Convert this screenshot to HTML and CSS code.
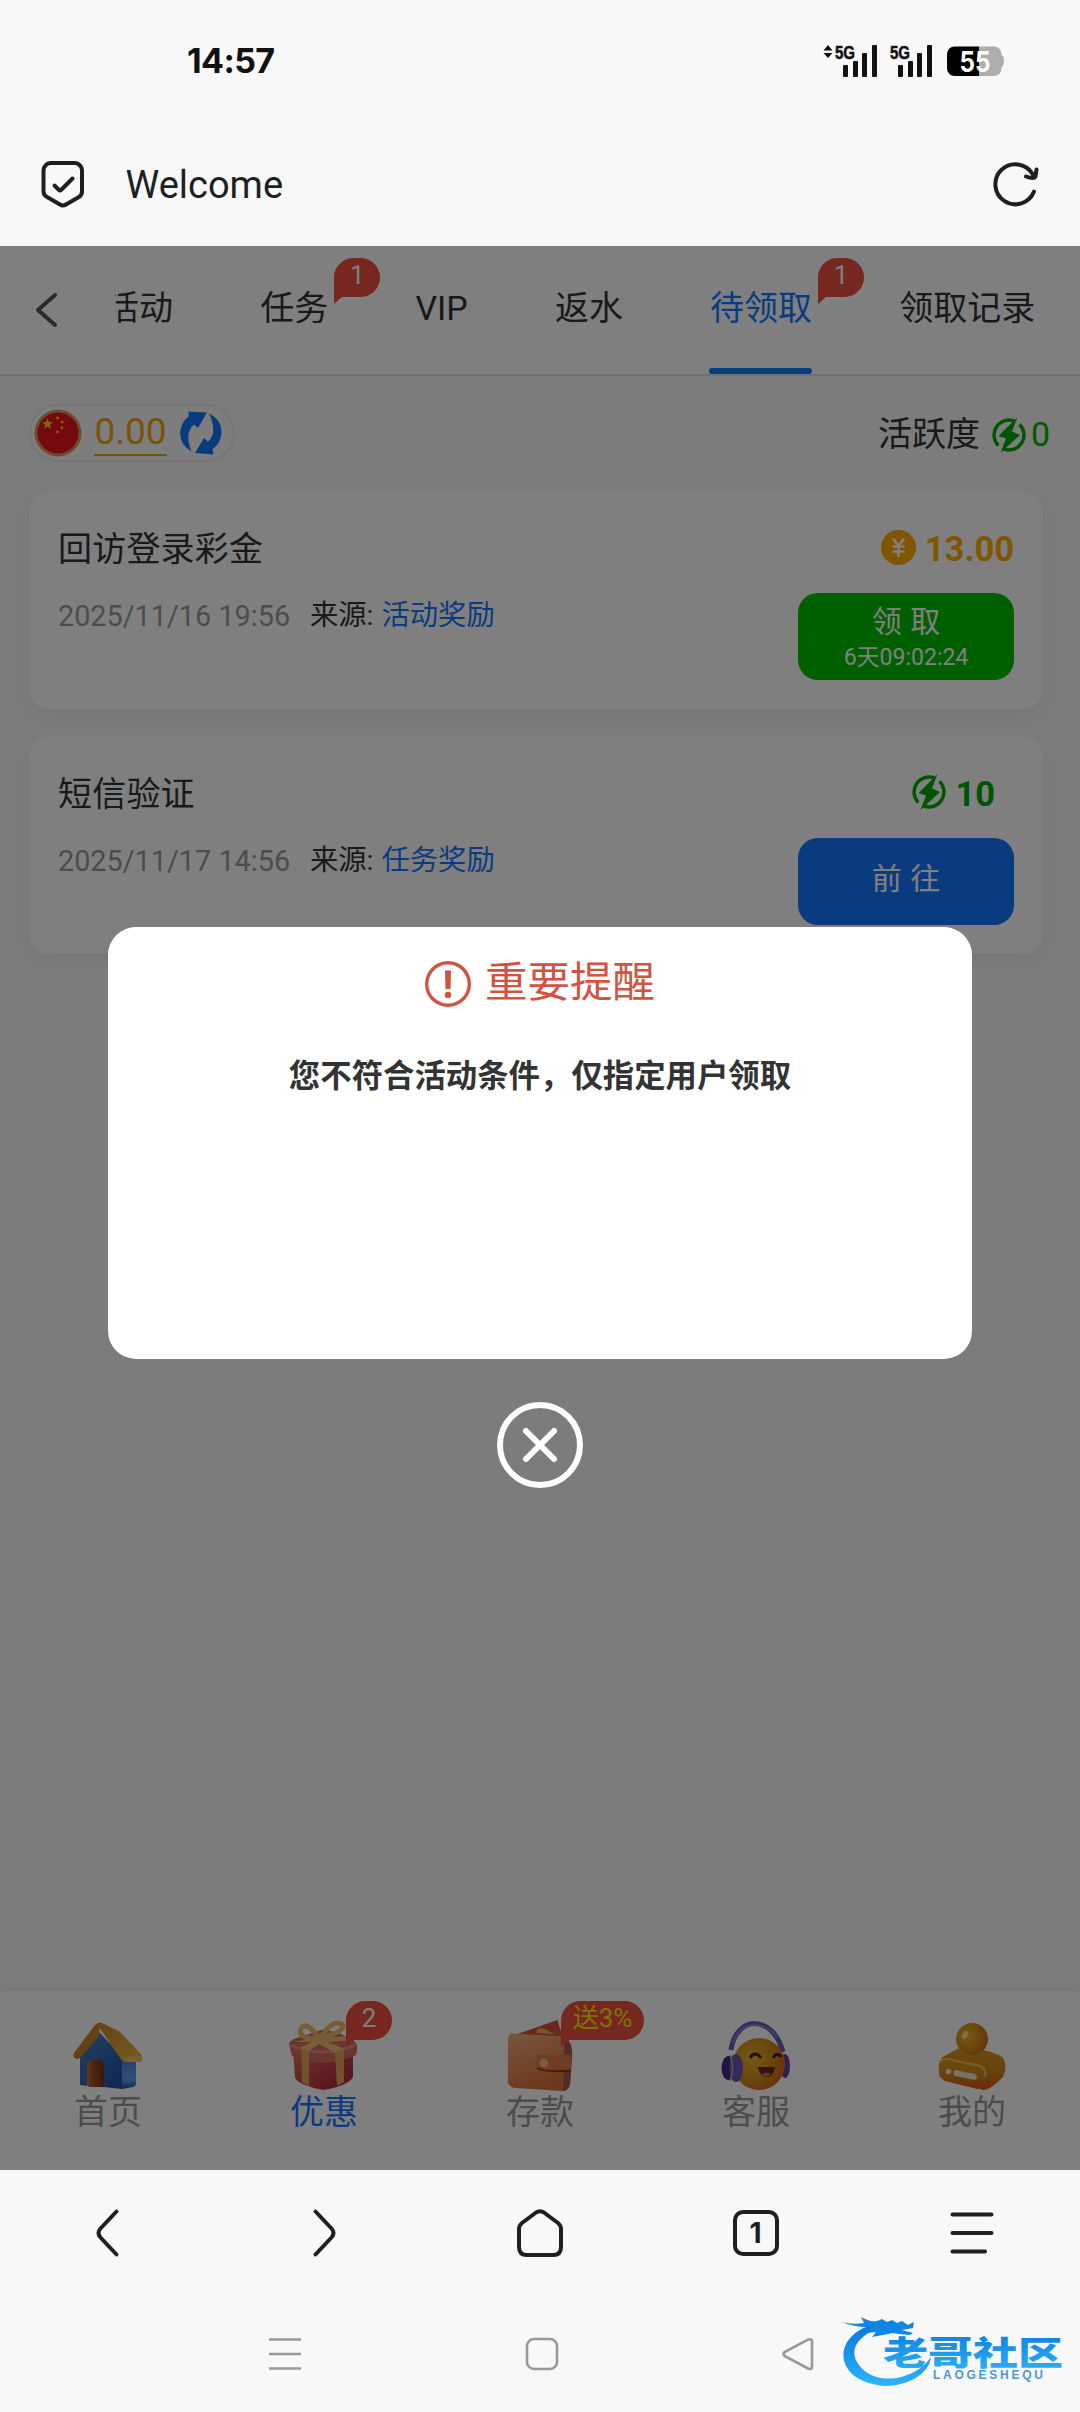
FILE: index.html
```html
<!DOCTYPE html>
<html lang="zh-CN">
<head>
<meta charset="utf-8">
<title>Welcome</title>
<link rel="stylesheet" href="styles.css">
</head>
<body>
<svg class="defs" width="0" height="0" aria-hidden="true">
  <defs>
    <symbol id="bolt" viewBox="0 0 34 36">
      <path d="M22.100 3.900A15 15 0 0 0 6.400 28.600M11.900 32.100A15 15 0 0 0 27.600 7.400" fill="none" stroke="currentColor" stroke-width="3.400"/>
      <path d="M25.500 0 L6.500 19 L14 21.500 L8.500 36 L28 18 L20 14.500 Z" fill="currentColor"/>
    </symbol>
    <linearGradient id="roof" x1="0" y1="0" x2="1" y2="1"><stop offset="0" stop-color="#c98a28"/><stop offset="1" stop-color="#efb445"/></linearGradient>
    <linearGradient id="wall" x1="0" y1="0" x2="1" y2="1"><stop offset="0" stop-color="#4c7cc4"/><stop offset="1" stop-color="#1c50a8"/></linearGradient>
    <linearGradient id="wall2" x1="0" y1="0" x2="0" y2="1"><stop offset="0" stop-color="#3f7fd6"/><stop offset=".7" stop-color="#62a2e8"/><stop offset="1" stop-color="#1e4f9c"/></linearGradient>
    <linearGradient id="door" x1="0" y1="0" x2="1" y2="0"><stop offset="0" stop-color="#d07830"/><stop offset=".3" stop-color="#a2521c"/><stop offset="1" stop-color="#6e3214"/></linearGradient>
    <linearGradient id="box" x1="0" y1="0" x2="1" y2="1"><stop offset="0" stop-color="#dc6a58"/><stop offset="1" stop-color="#a81f38"/></linearGradient>
    <linearGradient id="leather" x1="0" y1="0" x2=".4" y2="1"><stop offset="0" stop-color="#efae7c"/><stop offset="1" stop-color="#dc7038"/></linearGradient>
    <radialGradient id="ball" cx=".35" cy=".4" r=".75"><stop offset="0" stop-color="#ecb02c"/><stop offset=".6" stop-color="#d08a18"/><stop offset="1" stop-color="#d8541c"/></radialGradient>
    <linearGradient id="base" x1="0" y1="0" x2="0" y2="1"><stop offset="0" stop-color="#d6971f"/><stop offset=".6" stop-color="#cc801a"/><stop offset="1" stop-color="#d8541c"/></linearGradient>
    <linearGradient id="water" x1="0" y1="0" x2="0" y2="1"><stop offset="0" stop-color="#0878dc"/><stop offset="1" stop-color="#2db4fa"/></linearGradient>
  </defs>
</svg>

<header class="chrome-top">
  <div class="status">
    <span class="clock">14:57</span>
    <svg class="status-icons" width="182" height="36" viewBox="823 43 182 36">
      <g fill="#111">
        <path d="M823.500 50.500 L828 45 L832.500 50.500ZM823.500 53 L832.500 53 L828 58Z"/>
        <text class="net" x="835" y="58.500" textLength="20" lengthAdjust="spacingAndGlyphs">5G</text>
        <rect x="843" y="65" width="5" height="12" rx="1"/><rect x="853" y="61" width="5" height="16" rx="1"/><rect x="862" y="53" width="5" height="24" rx="1"/><rect x="872" y="45" width="5" height="32" rx="1"/>
        <text class="net" x="890" y="58.500" textLength="20" lengthAdjust="spacingAndGlyphs">5G</text>
        <rect x="898" y="65" width="5" height="12" rx="1"/><rect x="908" y="61" width="5" height="16" rx="1"/><rect x="917" y="53" width="5" height="24" rx="1"/><rect x="927" y="45" width="5" height="32" rx="1"/>
      </g>
      <path d="M979 46.500H994A7.500 7.500 0 0 1 1001.500 54V55Q1004 56 1004 61T1001.500 67V69A7.500 7.500 0 0 1 994 76H979Z" fill="#adadad"/>
      <path d="M979 46.500H954.500A7.500 7.500 0 0 0 947 54V68.500A7.500 7.500 0 0 0 954.500 76H979Z" fill="#000"/>
      <text class="charge" x="959.500" y="71.500" textLength="31" lengthAdjust="spacingAndGlyphs">55</text>
    </svg>
  </div>
  <div class="address">
    <svg width="44" height="48" viewBox="0 0 44 48" fill="none" stroke="#1f1f1f" stroke-width="4" stroke-linecap="round" stroke-linejoin="round"><path d="M9.500 3H34A7.500 7.500 0 0 1 41 10.500V31.500Q41 35 38 37L25 44.500Q22 46.500 19 44.500L6 37Q2.500 35 2.500 31.500V10.500A7.500 7.500 0 0 1 9.500 3Z"/><path d="M13.500 25.500 18 30Q19 31 20.500 29.500L31.500 18.500"/></svg>
    <span class="page-title">Welcome</span>
    <svg class="reload" width="46" height="46" viewBox="0 0 46 46" fill="none" stroke="#1f1f1f" stroke-width="4" stroke-linecap="round" stroke-linejoin="round"><path d="M41 30.500A20 20 0 1 1 39.500 13L41.500 16.500M33 15.500Q41 18.500 42.500 15.500L43.500 8.500"/></svg>
  </div>
</header>

<main class="app">
  <nav class="tabs">
    <svg class="back" width="24" height="36" viewBox="0 0 24 36" fill="none" stroke="#555" stroke-width="4" stroke-linecap="round" stroke-linejoin="round"><path d="M20 3 3 18 20 33"/></svg>
    <div class="tab-strip">
      <div class="tab">活动</div>
      <div class="tab">任务<span class="bubble">1</span></div>
      <div class="tab">VIP</div>
      <div class="tab">返水</div>
      <div class="tab active">待领取<span class="bubble">1</span></div>
      <div class="tab">领取记录</div>
    </div>
  </nav>

  <section class="summary">
    <div class="wallet-pill">
      <svg width="48" height="48" viewBox="0 0 48 48"><circle cx="24" cy="24" r="23.500" fill="#d9985a"/><circle cx="24" cy="24" r="20.500" fill="#e8141c"/><g fill="#ffd21e"><path d="M13.500 9l1.400 4 4.100.1-3.200 2.600 1.200 4.100-3.500-2.400-3.500 2.400 1.200-4.100L8 13.100l4.100-.1z"/><circle cx="23.500" cy="9" r="1.400"/><circle cx="28" cy="13" r="1.400"/><circle cx="28" cy="19" r="1.400"/><circle cx="23.500" cy="23" r="1.400"/></g></svg>
      <span class="balance">0.00</span>
      <svg width="42" height="44" viewBox="0 0 42 44" fill="#1677ff"><path d="M8.500.500 27 1.500 18 17 14 13.500Q4 22 11.500 40.500Q-1 33 .3 20.500Q1.500 11 8.500 5.500Z"/><path d="M33.500 43.500 15 42 24 27 28 30.500Q38 22 29 2.500Q42.500 9 41.500 22.500Q40.500 33 32.500 38Z"/></svg>
    </div>
    <div class="activity">活跃度<svg class="bolt" width="34" height="36"><use href="#bolt"/></svg><b>0</b></div>
  </section>

  <section class="rewards">
    <article class="card">
      <div class="info">
        <h2>回访登录彩金</h2>
        <p><time>2025/11/16 19:56</time><span class="source">来源:</span><a>活动奖励</a></p>
      </div>
      <div class="claim">
        <div class="amount gold"><svg width="35" height="35" viewBox="0 0 35 35"><circle cx="17.500" cy="17.500" r="17.500" fill="currentColor"/><path d="M12 8.500 17.500 16 23 8.500M17.500 16V27M11.500 16.500H23.500M11.500 21.500H23.500" fill="none" stroke="#fff" stroke-width="2.600"/></svg>13.00</div>
        <button class="btn green"><span>领 取</span><small>6天09:02:24</small></button>
      </div>
    </article>
    <article class="card">
      <div class="info">
        <h2>短信验证</h2>
        <p><time>2025/11/17 14:56</time><span class="source">来源:</span><a>任务奖励</a></p>
      </div>
      <div class="claim">
        <div class="amount points"><svg width="34" height="36"><use href="#bolt"/></svg>10</div>
        <button class="btn blue"><span>前 往</span></button>
      </div>
    </article>
  </section>

  <nav class="bottom-nav">
    <div class="item">
      <svg width="70" height="72" viewBox="0 0 70 72">
        <path d="M14 40H31V67L16 67 14 65Z" fill="url(#door)"/>
        <path d="M7 32 26 12 49 36V69L31 67V46Q31 40 25 40H20Q14 40 14 46V66L7 65Z" fill="url(#wall)"/>
        <path d="M49 36 63 40V63Q63 66 60 67L49 69Z" fill="url(#wall2)"/>
        <path d="M27 3Q24 3 22 5L1 33Q-1 38 4 39Q6 39 8 37L26 16Z" fill="#c48528"/>
        <path d="M24 4Q27 1 31 4L46 11Q50 15 68 34Q71 41 66 42L53 42Q50 42 47 38Z" fill="url(#roof)"/>
        <path d="M52 39Q56 34 67 36Q71 40 67 42L54 42Z" fill="#f3c161"/>
      </svg>
      <span>首页</span>
    </div>
    <div class="item current">
      <svg width="70" height="72" viewBox="0 0 70 72">
        <path d="M4 30 64 30V57Q59 66 34 70Q10 65 6 58Z" fill="url(#box)"/>
        <path d="M0 24Q1 19 14 16L32 10Q48 10 65 21Q70 24 67 35Q48 43 34 43Q18 43 3 36Z" fill="#d56a60"/>
        <path d="M1 25Q33 39 66 25" fill="none" stroke="#e08c80" stroke-width="3"/>
        <path d="M12 28 20 31V66L13 62ZM46 33 55 30V62L48 66Z" fill="#e2a458"/>
        <path d="M3 22 30 18 60 16 63 20 40 22 55 29 46 33 30 24 20 31 11 28 22 22Z" fill="#f0bb72"/>
        <path d="M31 19Q8 19 12 9T31 19Q43-1 52 4T31 19" fill="none" stroke="#edba71" stroke-width="5"/>
      </svg>
      <span>优惠</span><i class="bubble">2</i>
    </div>
    <div class="item">
      <svg width="70" height="74" viewBox="0 0 70 74">
        <path d="M10 15 53 0 58 17Z" fill="#d45240"/><path d="M31 13Q32 7 39 9L51 15Z" fill="#e7b844"/>
        <path d="M5 14 59 17Q68 22 67 33L66 66Q65 73 58 73L10 70Q3 69 2 64V20Q2 15 5 14Z" fill="url(#leather)"/>
        <path d="M60 18Q69 22 68 38L66 65Q64 72 59 73Z" fill="#a45450"/>
        <path d="M32 36 67 36V52L38 54Q32 52 31 44Z" fill="#e07a48"/><path d="M32 49Q37 54 67 52" fill="none" stroke="#8d391d" stroke-width="2"/><circle cx="39" cy="44" r="4.500" fill="#f0bd8a"/>
      </svg>
      <span>存款</span><i class="bubble promo">送3%</i>
    </div>
    <div class="item">
      <svg width="70" height="72" viewBox="0 0 70 72">
        <path d="M10 30C15-5 52-6 62 32" fill="none" stroke="#6a57b8" stroke-width="5"/><path d="M12 23C18 1 43-1 56 17" fill="none" stroke="#9384d6" stroke-width="1.500"/>
        <ellipse cx="64" cy="46" rx="5" ry="12" fill="#5b42aa"/>
        <circle cx="38" cy="44" r="26" fill="url(#ball)"/>
        <ellipse cx="7.500" cy="48" rx="7" ry="12" fill="#3b2b88"/><ellipse cx="15" cy="48" rx="7" ry="14" fill="#6657bd"/><path d="M9 35Q14 48 9 61" fill="none" stroke="#c9a865" stroke-width="1.500"/>
        <path d="M29 38Q34 30 40 38M52 38Q56 31 60 37" fill="none" stroke="#402411" stroke-width="2.800"/>
        <path d="M37 47H54Q52 58 45 57Q38 55 37 47Z" fill="#6d241b"/><path d="M41 54Q46 51 50 54Q46 59 41 54Z" fill="#e7614c"/>
      </svg>
      <span>客服</span>
    </div>
    <div class="item">
      <svg width="70" height="72" viewBox="0 0 70 72">
        <path d="M4 38 20 29Q43 27 62 35Q70 39 68 51L66 57Q53 70 46 70L20 62Z" fill="url(#base)"/>
        <path d="M2 44Q3 37 11 38L43 45Q51 48 49 58T40 69L12 62Q1 60 2 51Z" fill="url(#base)"/>
        <path d="M4 43Q5 38 11 39L43 46Q50 49 48 57" fill="none" stroke="#edbd49" stroke-width="2"/>
        <path d="M18 50 38 54Q42 57 38 60L18 56Q15 52 18 50Z" fill="#f1e5cf"/><circle cx="11.500" cy="51.500" r="2.800" fill="#f1e5cf"/>
        <circle cx="35" cy="19" r="16" fill="url(#ball)"/><ellipse cx="28" cy="15" rx="2.500" ry="4.500" fill="#fbe39c" transform="rotate(25 28 15)"/>
      </svg>
      <span>我的</span>
    </div>
  </nav>

  <div class="mask">
    <div class="dialog">
      <h3><svg width="46" height="46" viewBox="0 0 46 46"><circle cx="23" cy="23" r="21.300" fill="none" stroke="#d2533f" stroke-width="3.400"/><path d="M20 9.500H26L25.500 28H20.500Z" fill="#d2533f"/><circle cx="23" cy="34" r="3.200" fill="#d2533f"/></svg>重要提醒</h3>
      <p>您不符合活动条件，仅指定用户领取</p>
    </div>
    <svg class="close" width="86" height="86" viewBox="0 0 86 86" fill="none" stroke="#fff" stroke-width="6" stroke-linecap="round"><circle cx="43" cy="43" r="40"/><path d="M29 29 57 57M57 29 29 57"/></svg>
  </div>
</main>

<footer class="chrome-bottom">
  <div class="toolbar">
    <svg width="48" height="52" viewBox="0 0 48 52"><path d="M32.500 4.500 16.500 21.500Q12.500 26 16.500 30.500L32.500 47.500"/></svg>
    <svg width="48" height="52" viewBox="0 0 48 52"><path d="M15.500 4.500 31.500 21.500Q35.500 26 31.500 30.500L15.500 47.500"/></svg>
    <svg width="48" height="52" viewBox="0 0 48 52"><path d="M20 5.500Q24 3 28 5.500L42 16Q45 18.500 45 22V40Q45 48 37 48H11Q3 48 3 40V22Q3 18.500 6 16Z"/></svg>
    <svg width="48" height="52" viewBox="0 0 48 52"><rect x="3" y="5" width="42" height="42" rx="8"/><text class="tab-count" x="23.500" y="36">1</text></svg>
    <svg width="48" height="52" viewBox="0 0 48 52"><path d="M4.500 7.500H43.500M4.500 26H43.500M4.500 44.500H37"/></svg>
  </div>
  <div class="system">
    <svg width="34" height="34" viewBox="0 0 34 34"><path d="M1 2.500H33M1 17H33M1 31.500H33"/></svg>
    <svg width="34" height="34" viewBox="0 0 34 34"><rect x="2" y="2" width="30" height="30" rx="7"/></svg>
    <svg width="34" height="34" viewBox="0 0 34 34"><path d="M27 2.700 3.500 15Q1.500 17 3.500 19L27 31.500Q31 33 31 30V4Q31 1.500 27 2.700Z"/></svg>
  </div>
  <svg class="watermark" width="230" height="80" viewBox="838 2310 230 80">
    <path d="M872 2325C832 2336 832 2382 885 2386C908 2386 929 2374 931 2357C919 2376 886 2386 866 2372C848 2358 850 2340 877 2329Z" fill="url(#water)"/>
    <path d="M842 2322Q852 2325 864 2323L861 2317Q869 2322 877 2321L882 2319 887 2322 892 2320 897 2323 902 2321 908 2325 914 2322 913 2328 902 2330 913 2333 910 2335 899 2334 893 2333 883 2335 872 2337 876 2332 866 2333 871 2327Q856 2328 842 2322Z" fill="#0f86e6"/>
    <text class="wm-cn" transform="translate(883 2364.500) scale(1 .76)" textLength="180" lengthAdjust="spacingAndGlyphs">老哥社区</text>
    <text class="wm-en" x="933" y="2379" textLength="110" lengthAdjust="spacing">LAOGESHEQU</text>
  </svg>
</footer>
</body>
</html>
```
FILE: styles.css
```css
* { box-sizing: border-box; }

body {
  margin: 0;
  width: 1080px;
  height: 2412px;
  display: flex;
  flex-direction: column;
  overflow: hidden;
  background: #f8f8f8;
  color: #333;
  font-family: Roboto, "Noto Sans CJK SC", sans-serif;
}

svg { display: block; flex: none; }
.defs { position: absolute; }
h2, h3, p { margin: 0; font-weight: 400; }
i, b { font-style: normal; font-weight: 400; }

/* browser top */
.chrome-top { height: 246px; flex: none; }
.status {
  height: 122px;
  padding: 0 75px 0 187px;
  display: flex;
  align-items: center;
  justify-content: space-between;
}
.clock {
  font: 700 34px/40px Inter, sans-serif;
  letter-spacing: -0.6px;
  color: #111;
}
.net { font: 700 18.500px "Liberation Sans", sans-serif; stroke: #111; stroke-width: .5px; }
.charge { font: 700 28px Inter, sans-serif; fill: #fff; }
.address {
  height: 124px;
  padding: 0 41px;
  display: flex;
  align-items: center;
}
.page-title {
  margin: 2px 0 0 40.500px;
  font-size: 38px;
  line-height: 44px;
  color: #1f1f1f;
}
.reload { margin-left: auto; }

/* page */
.app {
  position: relative;
  height: 1924px;
  flex: none;
  display: flex;
  flex-direction: column;
  background: #f8f8f8;
}
.tabs {
  height: 130px;
  flex: none;
  display: flex;
  align-items: stretch;
  padding-left: 35px;
  background: #fff;
  border-bottom: 2px solid #e2e2e2;
}
.back { align-self: center; margin-right: 56px; }
.tab-strip {
  flex: 1;
  display: flex;
  gap: 87.200px;
  overflow: hidden;
}
.tab {
  position: relative;
  flex: none;
  height: 128px;
  font-size: 34px;
  line-height: 124px;
  white-space: nowrap;
}
.tab:first-child { margin-left: -10px; }
.tab.active { color: #1677ff; }
.tab.active::before {
  content: "";
  position: absolute;
  left: -1px;
  right: 0;
  bottom: 0;
  height: 6px;
  border-radius: 3px;
  background: #1677ff;
}

.bubble {
  position: absolute;
  top: 12px;
  left: calc(100% + 6px);
  min-width: 46px;
  height: 39px;
  border-radius: 20px 20px 20px 0;
  background: #ea4f40;
  color: #fff;
  font-size: 26px;
  line-height: 35px;
  text-align: center;
}
.bubble::after {
  content: "";
  position: absolute;
  left: 0;
  top: 100%;
  margin-top: -1px;
  border-top: 8px solid #ea4f40;
  border-right: 9px solid transparent;
}

.summary {
  height: 116px;
  flex: none;
  padding: 28px 30px 0 29px;
  display: flex;
  justify-content: space-between;
  align-items: flex-start;
}
.wallet-pill {
  height: 58px;
  width: 206px;
  padding: 0 3px;
  display: flex;
  align-items: center;
  border: 2px solid #e8ebf0;
  border-radius: 29px;
  background: #fbfbfb;
}
.balance {
  margin: 0 13px 0 12px;
  height: 46px;
  width: 73px;
  text-align: center;
  border-bottom: 2px solid #f2a50c;
  color: #f2a50c;
  font-size: 37px;
  line-height: 43px;
}
.activity {
  height: 60px;
  display: flex;
  align-items: center;
  font-size: 34px;
  line-height: 40px;
}
.activity .bolt { margin: 1px 5px 0 12px; color: #00a800; }
.activity b { color: #00b400; }

.rewards {
  padding: 0 37px 0 29px;
  display: flex;
  flex-direction: column;
  gap: 28px;
}
.card {
  height: 217px;
  padding: 31px 29px 0;
  display: flex;
  justify-content: space-between;
  border-radius: 20px;
  background: #fff;
  box-shadow: 0 6px 16px rgba(90, 115, 160, .09);
}
.card h2 { font-size: 34px; line-height: 52px; letter-spacing: .2px; }
.card p {
  margin-top: 21px;
  display: flex;
  align-items: center;
  font-size: 28.300px;
  line-height: 40px;
}
.card time { width: 231px; color: #999; font-size: 28.800px; white-space: nowrap; }
.source { margin-left: 21px; width: 71.500px; }
.card a { color: #1677ff; }
.claim { width: 216px; }
.amount {
  height: 52px;
  display: flex;
  align-items: center;
  justify-content: flex-end;
  gap: 9px;
  font-weight: 700;
  font-size: 34.500px;
  line-height: 52px;
}
.amount svg { margin-bottom: 4px; }
.gold { color: #ffab00; }
.points { color: #00a800; padding-right: 19px; }
.btn {
  width: 216px;
  height: 87px;
  margin: 18px 0 0;
  padding: 0 0 6px;
  border: 0;
  border-radius: 20px;
  display: flex;
  flex-direction: column;
  align-items: center;
  justify-content: center;
  color: #fff;
  font-family: inherit;
}
.btn span { font-size: 30px; line-height: 36px; word-spacing: 1px; }
.btn small { margin-top: 4px; font-size: 23px; line-height: 27px; }
.green { background: #00c000; padding: 2px 0 0; }
.blue { background: #1677ff; }

.bottom-nav {
  margin-top: auto;
  height: 179px;
  display: grid;
  grid-template-columns: repeat(5, 1fr);
  background: #fff;
  box-shadow: 0 -2px 8px rgba(0, 0, 0, .05);
}
.item {
  position: relative;
  display: flex;
  flex-direction: column;
  align-items: center;
  padding-top: 29px;
  color: #999;
  font-size: 34px;
  line-height: 40px;
}
.item svg { height: 72px; }
.item.current { color: #1677ff; }
.item .bubble { top: 10px; left: 130px; }
.item .promo { left: 129px; width: 83px; color: #ffe200; white-space: nowrap; }

/* dimmed layer with dialog */
.mask {
  position: absolute;
  inset: 0;
  padding-top: 681px;
  display: flex;
  flex-direction: column;
  align-items: center;
  background: rgba(0, 0, 0, .5);
}
.dialog {
  width: 864px;
  height: 432px;
  padding-top: 30px;
  border-radius: 28px;
  background: #fff;
  text-align: center;
}
.dialog h3 {
  display: flex;
  justify-content: center;
  align-items: center;
  gap: 14px;
  font-size: 42.500px;
  line-height: 52px;
  color: #d2533f;
}
.dialog h3 svg { margin-top: 1px; }
.dialog p {
  margin-top: 46px;
  font-size: 31.400px;
  line-height: 44px;
  font-weight: 700;
  color: #333;
}
.close { margin-top: 43px; }

/* browser bottom */
.chrome-bottom { position: relative; flex: 1; }
.toolbar {
  height: 126px;
  display: grid;
  grid-template-columns: repeat(5, 1fr);
  align-items: center;
  justify-items: center;
}
.toolbar svg { fill: none; stroke: #1f1f1f; stroke-width: 4; stroke-linecap: round; stroke-linejoin: round; }
.toolbar .tab-count { font: 700 28px Inter, sans-serif; text-anchor: middle; fill: #1f1f1f; stroke: none; }
.system {
  height: 116px;
  padding: 0 265px 0 268px;
  display: flex;
  align-items: center;
  justify-content: space-between;
}
.system svg { fill: none; stroke: #999; stroke-width: 2.600; }
.watermark { position: absolute; right: 12px; top: 140px; }
.wm-cn { font: 900 44px "Noto Sans CJK SC", sans-serif; fill: url(#water); }
.wm-en { font: 700 12px "Liberation Sans", sans-serif; fill: #4d97d4; }
```
